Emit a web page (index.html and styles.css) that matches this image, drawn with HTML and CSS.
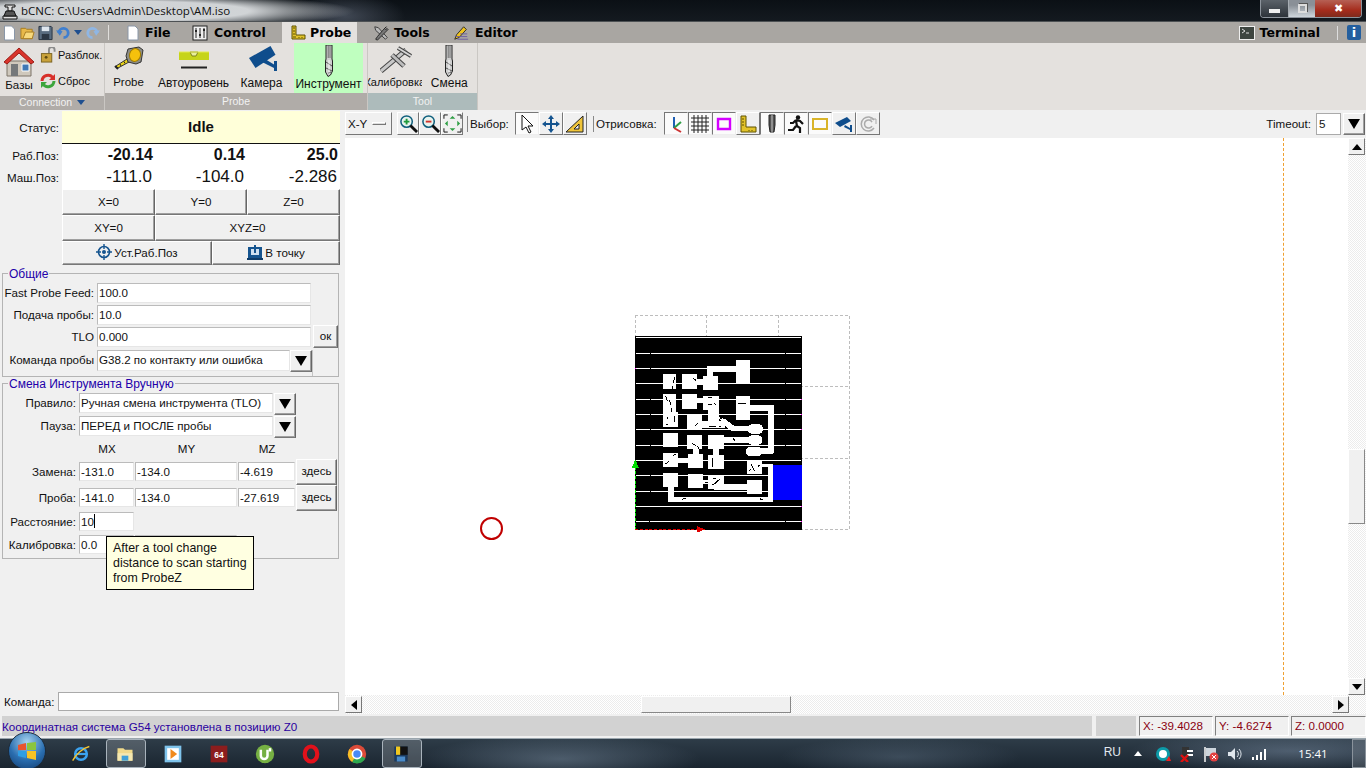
FILE: index.html
```html
<!DOCTYPE html>
<html lang="ru">
<head>
<meta charset="utf-8">
<title>bCNC</title>
<link rel="stylesheet" href="styles.css">
</head>
<body>
<svg class="defs" aria-hidden="true">
  <symbol id="mill" viewBox="0 0 8 32">
    <path d="M1 0V14L.5 16V27L3 31.500 5.500 30 7.500 26V16L7 14V0z" fill="#cfcfcf" stroke="#222" stroke-width="1"/>
    <path d="M3.200 0V13M5 0V13" stroke="#555" fill="none" stroke-width=".8"/>
    <path d="M1 17l6 4M1 23l6 3M3 28l3-1" stroke="#444" fill="none" stroke-width=".9"/>
    <path d="M4 15v13" stroke="#fff" fill="none" stroke-width=".8"/>
  </symbol>
  <symbol id="tri" viewBox="0 0 12 10"><path d="M0 0h12L6 10z" fill="#000"/></symbol>
  <symbol id="up" viewBox="0 0 10 6"><path d="M0 6h10L5 0z" fill="#000"/></symbol>
</svg>

<header class="titlebar">
  <svg class="appicon" viewBox="0 0 18 18"><path d="M2 14h14v3H2zM4 3h10v2h-3v4H7V5H4z" fill="#ddd" stroke="#111"/><path d="M5 9h8l2 5H3z" fill="#555" stroke="#111"/></svg>
  <span class="title">bCNC: C:\Users\Admin\Desktop\AM.iso</span>
  <div class="winbtns">
    <span class="wb wb-min"><i></i></span>
    <span class="wb wb-max"><i></i></span>
    <span class="wb wb-close">✖</span>
  </div>
</header>

<nav class="tabs">
  <div class="quick">
    <svg class="q" viewBox="0 0 14 16"><path d="M2 1h7l3 3v11H2z" fill="#fff" stroke="#8a97a8"/></svg>
    <svg class="q" viewBox="0 0 16 16"><path d="M1 3h5l1 1h6v10H1z" fill="#e8b94a" stroke="#a57b20"/><path d="M3 14l3-7h9l-2 7z" fill="#f7d97c" stroke="#a57b20"/></svg>
    <svg class="q" viewBox="0 0 16 16"><path d="M1 1h13l1 1v13H1z" fill="#5a6c80" stroke="#26313f"/><path d="M4 1h8v5H4z" fill="#dfe6ee"/><path d="M4 9h8v6H4z" fill="#2c3644"/></svg>
    <svg class="q" viewBox="0 0 16 16"><path d="M3 8a5 5 0 1 1 5 5" fill="none" stroke="#3f7fd0" stroke-width="3"/><path d="M0 5l4 6 3-5z" fill="#3f7fd0"/></svg>
    <svg class="q qs" viewBox="0 0 8 5"><path d="M0 0h8L4 5z" fill="#1f4f8f"/></svg>
    <svg class="q" viewBox="0 0 16 16"><path d="M13 8a5 5 0 1 0-5 5" fill="none" stroke="#8fb6e4" stroke-width="3"/><path d="M16 5l-4 6-3-5z" fill="#8fb6e4"/></svg>
    <span class="qsep"></span>
  </div>
  <a class="tab t-file"><svg class="ti" viewBox="0 0 14 16"><path d="M2 1h7l3 3v11H2z" fill="#fff" stroke="#8a97a8"/></svg>File</a>
  <a class="tab t-control"><svg class="ti" viewBox="0 0 16 16"><rect x="1" y="1" width="14" height="14" fill="#eee" stroke="#222"/><path d="M4 3v10M8 3v10M12 3v10" stroke="#222"/><path d="M3 5h2v2H3zM7 9h2v2H7zM11 4h2v2h-2z" fill="#222"/></svg>Control</a>
  <a class="tab t-probe"><svg class="ti" viewBox="0 0 16 16"><path d="M2 1h4v9h9v4H2z" fill="#e2c32a" stroke="#5e5200"/><path d="M3 12h3M3 9h2M3 6h2M3 3h2M9 12v1M12 12v1" stroke="#5e5200"/></svg>Probe</a>
  <a class="tab t-tools"><svg class="ti ti-l" viewBox="0 0 18 18"><path d="M2 2l4 1 10 11-2 2L3 6z" fill="#b9b9b9" stroke="#333"/><path d="M15 2l-4 4-6 7-2 3 2 1 3-3 6-6 3-3-1-1-2 1-1-1z" fill="#777" stroke="#222"/></svg>Tools</a>
  <a class="tab t-editor"><svg class="ti" viewBox="0 0 18 18"><path d="M2 16l2-5 8-9 3 3-8 9z" fill="#f0c31c" stroke="#222"/><path d="M3 13h13M5 16h12M8 10h8" stroke="#6a5aa0"/></svg>Editor</a>
  <a class="tab t-term"><svg class="ti ti-term" viewBox="0 0 16 14"><rect x=".5" y=".5" width="15" height="13" fill="#3d4540" stroke="#eee"/><path d="M3 3l3 2-3 2M7 7h3" stroke="#ddd" fill="none"/></svg>Terminal</a>
  <span class="tsep"></span>
  <span class="info">i</span>
</nav>

<section class="ribbon">
  <div class="group g-conn">
    <div class="g-body conn">
      <div class="rbtn home">
        <svg class="home-ic" viewBox="0 0 32 30"><path d="M4 14h24v15H4z" fill="#cfc8bc" stroke="#7d7568"/><path d="M1 15L16 1l15 14-3 2L16 6 4 17z" fill="#d9342b" stroke="#9c1d17"/><path d="M8 17h7v12H8z" fill="#75787a"/><path d="M19 17h7v7h-7z" fill="#3f78b5" stroke="#fff"/></svg>
        <span>Базы</span>
      </div>
      <div class="conn-side">
        <div class="sbtn"><svg class="s-ic" viewBox="0 0 16 17"><path d="M9 7V3a3 3 0 0 1 6 0v2" fill="none" stroke="#8a8a8a" stroke-width="2"/><rect x="1" y="7" width="11" height="9" fill="#c9a23a" stroke="#7a6320"/><circle cx="6" cy="11" r="1.500" fill="#5c4810"/></svg><span>Разблок.</span></div>
        <div class="sbtn"><svg class="s-ic" viewBox="0 0 16 16"><path d="M2 8a6 6 0 0 1 11-3" fill="none" stroke="#d7302a" stroke-width="3"/><path d="M15 1v6H9z" fill="#d7302a"/><path d="M14 8a6 6 0 0 1-11 3" fill="none" stroke="#3ba53b" stroke-width="3"/><path d="M1 15V9h6z" fill="#3ba53b"/></svg><span>Сброс</span></div>
      </div>
    </div>
    <div class="g-foot f-conn">Connection <svg class="f-tri" viewBox="0 0 8 5"><path d="M0 0h8L4 5z" fill="#1f4f8f"/></svg></div>
  </div>
  <div class="group g-probe">
    <div class="g-body">
      <div class="rb rb-probe">
        <svg class="rb-ic" viewBox="0 0 30 26"><path d="M2 20l11-7 2 3-11 6z" fill="#e8d21a" stroke="#333"/><path d="M1 20l3 3" stroke="#222" stroke-width="2"/><path d="M6 18l1 2M10 15.500l1 2" stroke="#222"/><path d="M14 3L25 1l4 3-2 12-5 2-8-2-2-6z" fill="#8d8d86" stroke="#333"/><ellipse cx="21" cy="9" rx="5.500" ry="6.500" fill="#f5c10c" stroke="#a17d00" transform="rotate(15 21 9)"/></svg>
        <span>Probe</span>
      </div>
      <div class="rb rb-auto">
        <svg class="rb-ic" viewBox="0 0 30 26"><path d="M0 6h30v8H0z" fill="#c6d41a"/><path d="M11 6l2 4h4l2-4z" fill="#e9ee9a" stroke="#6b6f10" stroke-width=".8"/><path d="M0 6h30" stroke="#e4ea50"/><path d="M2 21.500h26" stroke="#222" stroke-width="2"/></svg>
        <span>Автоуровень</span>
      </div>
      <div class="rb rb-cam">
        <svg class="rb-ic" viewBox="0 0 30 26"><path d="M2 12L23.500 0 28.500 8.700 8.500 22z" fill="#0f4d8c"/><path d="M15 16l12 6v3h3V15h-3v3.500L18 13z" fill="#0f4d8c"/></svg>
        <span>Камера</span>
      </div>
      <div class="rb rb-tool on">
        <svg class="rb-mill"><use href="#mill"/></svg>
        <span>Инструмент</span>
      </div>
    </div>
    <div class="g-foot">Probe</div>
  </div>
  <div class="group g-tool">
    <div class="g-body">
      <div class="rb rb-cal">
        <svg class="rb-ic" viewBox="0 0 32 28"><path d="M1 25L26 4" stroke="#444" stroke-width="5"/><path d="M1 25L26 4" stroke="#c8c8c8" stroke-width="3"/><path d="M12 9l12 11" stroke="#444" stroke-width="5"/><path d="M12 9l12 11" stroke="#bdbdbd" stroke-width="3"/><path d="M18 2l13 8" stroke="#444" stroke-width="4"/><path d="M18 2l13 8" stroke="#d5d5d5" stroke-width="2"/></svg>
        <span>Калибровка</span>
      </div>
      <div class="rb rb-chg">
        <svg class="rb-mill"><use href="#mill"/></svg>
        <span>Смена</span>
      </div>
    </div>
    <div class="g-foot f-tool">Tool</div>
  </div>
</section>

<main class="main">
  <aside class="left">
    <div class="state">
      <div class="lbl st-l">Статус:</div>
      <div class="idle">Idle</div>
      <div class="lbl pos-l">Раб.Поз:</div>
      <div class="posv b">-20.14</div><div class="posv b">0.14</div><div class="posv b">25.0</div>
      <div class="lbl pos-l">Маш.Поз:</div>
      <div class="posv">-111.0</div><div class="posv">-104.0</div><div class="posv">-2.286</div>
    </div>
    <div class="btnrow r3"><button class="btn">X=0</button><button class="btn">Y=0</button><button class="btn">Z=0</button></div>
    <div class="btnrow r2a"><button class="btn">XY=0</button><button class="btn">XYZ=0</button></div>
    <div class="btnrow r2b">
      <button class="btn"><svg class="bi" viewBox="0 0 16 16"><circle cx="8" cy="8" r="5.500" fill="none" stroke="#15548f" stroke-width="1.600"/><circle cx="8" cy="8" r="2" fill="#15548f"/><path d="M8 0v5M8 11v5M0 8h5M11 8h5" stroke="#15548f" stroke-width="1.400"/></svg>Уст.Раб.Поз</button>
      <button class="btn"><svg class="bi" viewBox="0 0 16 16"><path d="M1 3h14v11H1z" fill="#15548f"/><path d="M4 5h8v6H4z" fill="#cfe0f0"/><path d="M7 1h2v8H7z" fill="#15548f"/><path d="M0 14h16v2H0z" fill="#0d3b68"/></svg>В точку</button>
    </div>

    <fieldset class="fs fs-common">
      <legend>Общие</legend>
      <div class="frow"><label class="fl w95">Fast Probe Feed:</label><span class="ent e-wide">100.0</span></div>
      <div class="frow"><label class="fl w95">Подача пробы:</label><span class="ent e-wide">10.0</span></div>
      <div class="frow"><label class="fl w95">TLO</label><span class="ent e-wide">0.000</span><button class="btn okb">ок</button></div>
      <div class="frow frow-cmb"><label class="fl w95">Команда пробы</label><span class="ent e-cmb">G38.2 по контакту или ошибка</span><button class="btn arr"><svg class="tri"><use href="#tri"/></svg></button><span class="cmb-end"></span></div>
    </fieldset>

    <fieldset class="fs fs-tool">
      <legend>Смена Инструмента Вручную</legend>
      <div class="trow t-a"><label class="fl w77">Правило:</label><span class="ent e-rule">Ручная смена инструмента (TLO)</span><button class="btn arr"><svg class="tri"><use href="#tri"/></svg></button></div>
      <div class="trow t-a"><label class="fl w77">Пауза:</label><span class="ent e-rule">ПЕРЕД и ПОСЛЕ пробы</span><button class="btn arr"><svg class="tri"><use href="#tri"/></svg></button></div>
      <div class="mhead"><span class="mh1">MX</span><span class="mh2">MY</span><span class="mh3">MZ</span></div>
      <div class="trow t-b"><label class="fl w77">Замена:</label><span class="ent e-x">-131.0</span><span class="ent e-y">-134.0</span><span class="ent e-z">-4.619</span><button class="btn here">здесь</button></div>
      <div class="trow t-b"><label class="fl w77">Проба:</label><span class="ent e-x">-141.0</span><span class="ent e-y">-134.0</span><span class="ent e-z">-27.619</span><button class="btn here">здесь</button></div>
      <div class="trow t-c"><label class="fl w77">Расстояние:</label><span class="ent e-x">10<i class="caret"></i></span></div>
      <div class="trow t-c"><label class="fl w77">Калибровка:</label><span class="ent e-x">0.0</span><span class="ent e-y"></span></div>
      <div class="tooltip">After a tool change<br>distance to scan starting<br>from ProbeZ</div>
    </fieldset>

    <div class="cmdrow"><label class="cmdl">Команда:</label><span class="ent e-cmd"></span></div>
  </aside>

  <div class="right">
    <div class="toolbar">
      <button class="tb xy">X-Y<i class="ind"></i></button>
      <button class="tb ic tz"><svg viewBox="0 0 20 20"><circle cx="8" cy="8" r="6" fill="#e8f3ee" stroke="#0f5f7d" stroke-width="1.600"/><path d="M5 8h6M8 5v6" stroke="#1f9a3c" stroke-width="2"/><path d="M12 12l7 7" stroke="#111" stroke-width="3"/></svg></button>
      <button class="tb ic tz"><svg viewBox="0 0 20 20"><circle cx="8" cy="8" r="6" fill="#e8f3ee" stroke="#0f5f7d" stroke-width="1.600"/><path d="M5 8h6" stroke="#d0342c" stroke-width="2"/><path d="M12 12l7 7" stroke="#111" stroke-width="3"/></svg></button>
      <button class="tb ic tz"><svg viewBox="0 0 20 20"><path d="M1 5V1h4M15 1h4v4M19 15v4h-4M5 19H1v-4" fill="none" stroke="#111"/><path d="M7 5l3-3 3 3zM7 15l3 3 3-3zM5 7l-3 3 3 3zM15 7l3 3-3 3z" fill="#2f9e44"/></svg></button>
      <span class="vsep s1"></span>
      <span class="tl tl1">Выбор:</span>
      <button class="tb ic sel"><svg viewBox="0 0 20 20"><path d="M5 1v15l4-3 3 6 2-1-3-6h5z" fill="#fff" stroke="#111"/></svg></button>
      <button class="tb ic"><svg viewBox="0 0 20 20"><path d="M10 1l3 4h-2v4h4V7l4 3-4 3v-2h-4v4h2l-3 4-3-4h2v-4H5v2l-4-3 4-3v2h4V5H7z" fill="#15548f"/></svg></button>
      <button class="tb ic"><svg viewBox="0 0 20 20"><path d="M1 18L18 2v16z" fill="#f0c53a" stroke="#222"/><path d="M9 15l5-5v5z" fill="#f0f0f0" stroke="#222"/></svg></button>
      <span class="vsep s2"></span>
      <span class="tl tl2">Отрисовка:</span>
      <button class="tb ic sel"><svg viewBox="0 0 20 20"><path d="M8 3v11" stroke="#1e5fb4" stroke-width="2"/><path d="M8 14l7-6" stroke="#2e9e44" stroke-width="2"/><path d="M8 14l7 4" stroke="#c33" stroke-width="2"/></svg></button>
      <button class="tb ic sel"><svg viewBox="0 0 20 20"><path d="M1 4h18M1 8h18M1 12h18M1 16h18M4 1v18M8 1v18M12 1v18M16 1v18" stroke="#222" fill="none"/></svg></button>
      <button class="tb ic sel"><svg viewBox="0 0 20 20"><path d="M4 5h12v10H4z" fill="none" stroke="#d400ff" stroke-width="2.400"/></svg></button>
      <button class="tb ic"><svg viewBox="0 0 20 20"><path d="M3 2h5v11h10v5H3z" fill="#e2c32a" stroke="#5e5200"/><path d="M4 5h2M4 8h2M4 11h2M11 16v1M14 16v1" stroke="#5e5200"/></svg></button>
      <button class="tb ic sel"><svg viewBox="0 0 20 20"><path d="M7 1h6v10l-1 7H8l-1-7z" fill="#555" stroke="#222"/><path d="M10 1v17" stroke="#ccc"/></svg></button>
      <button class="tb ic sel"><svg viewBox="0 0 20 20"><circle cx="12" cy="3.500" r="2.200" fill="#111"/><path d="M10 6l4 1 3 3M10 6l-3 3-3 0M10 7l1 5 3 2 0 5M10 12l-3 4-5 0" stroke="#111" stroke-width="2.200" fill="none"/></svg></button>
      <button class="tb ic sel"><svg viewBox="0 0 20 20"><path d="M3 5h14v10H3z" fill="none" stroke="#d9b429" stroke-width="2"/></svg></button>
      <button class="tb ic"><svg viewBox="0 0 20 20"><path d="M1 9l12-6 4 4-11 6z" fill="#0f4d8c"/><path d="M11 11l5 3v-3h2v7h-2v-2l-6-3z" fill="#0f4d8c"/></svg></button>
      <button class="tb ic"><svg viewBox="0 0 20 20"><path d="M16 14a7 7 0 1 1 0-8M14 12a4 4 0 1 1 0-4" fill="none" stroke="#aaa" stroke-width="1.500"/><path d="M12 5h6v5" fill="none" stroke="#aaa"/></svg></button>
      <span class="tspacer"></span>
      <span class="tl tl3">Timeout:</span>
      <span class="ent e-to">5</span>
      <button class="btn arr arr-to"><svg class="tri"><use href="#tri"/></svg></button>
    </div>

    <div class="viewrow">
      <div class="canvas">
        <i class="margin m1"></i>
        <svg class="pcb" viewBox="0 0 705 690" shape-rendering="crispEdges">
          <path d="M31 16H673V658M31 16V658M245 16V658M460 16V658M31 230H673M31 445H673M31 658H673" fill="none" stroke="#bdbdbd" stroke-width="3" stroke-dasharray="9 6"/>
          <rect x="30" y="78" width="501" height="581" fill="#000"/>
          <path d="M32 81H528M32 130H528M32 175H528M32 220H528M32 268H528M32 313H528M32 358H528M32 406H528M32 450H528M32 495H528M32 545H528M32 590H528M32 634H528" stroke="#fff" stroke-width="3"/>
          <path d="M75 128v5M75 173v5M75 266v5M75 311v5M75 356v5M75 404v5M75 493v5M75 543v5M72 632v5M480 128v5M480 173v5M480 218v5M480 266v5M480 311v5M480 356v5M480 404v5M480 493v5M480 632v5" stroke="#000" stroke-width="3"/>
          <g fill="#fff">
            <rect x="114" y="192" width="40" height="45"/><rect x="170" y="192" width="45" height="45"/><rect x="212" y="208" width="26" height="18"/>
            <rect x="234" y="198" width="45" height="42"/><rect x="247" y="168" width="85" height="18"/><rect x="247" y="168" width="18" height="35"/><rect x="332" y="150" width="43" height="72"/>
            <rect x="114" y="252" width="40" height="55"/><rect x="124" y="300" width="22" height="12"/><rect x="114" y="307" width="45" height="45"/>
            <rect x="170" y="252" width="45" height="45"/><rect x="215" y="265" width="25" height="15"/><rect x="234" y="258" width="48" height="42"/><rect x="248" y="300" width="35" height="50"/>
            <rect x="332" y="258" width="43" height="72"/><rect x="375" y="285" width="70" height="18"/><rect x="428" y="285" width="18" height="145"/>
            <rect x="186" y="315" width="45" height="42"/><rect x="225" y="332" width="75" height="22"/>
            <path d="M280 320l22 8 26 20h45v16h-52l-28-22z"/>
            <rect x="368" y="342" width="46" height="30" rx="15"/>
            <rect x="114" y="369" width="45" height="42"/><rect x="186" y="375" width="45" height="42"/><rect x="203" y="417" width="18" height="20"/><rect x="189" y="432" width="45" height="42"/>
            <rect x="248" y="375" width="50" height="42"/><rect x="263" y="417" width="18" height="20"/><rect x="248" y="435" width="50" height="42"/>
            <rect x="298" y="382" width="70" height="18"/><rect x="368" y="375" width="44" height="30" rx="15"/>
            <rect x="362" y="410" width="50" height="28" rx="14"/><rect x="405" y="415" width="40" height="18"/>
            <rect x="114" y="430" width="45" height="40"/><rect x="159" y="445" width="30" height="14"/>
            <rect x="366" y="450" width="46" height="42"/><rect x="412" y="462" width="30" height="10"/>
            <rect x="114" y="489" width="45" height="42"/><rect x="128" y="531" width="18" height="45"/><rect x="128" y="560" width="315" height="16"/>
            <rect x="189" y="492" width="45" height="42"/><rect x="234" y="510" width="15" height="12"/><rect x="249" y="497" width="48" height="40"/><rect x="268" y="522" width="100" height="18"/><rect x="366" y="510" width="46" height="42"/>
            <rect x="428" y="462" width="16" height="112"/>
          </g>
          <rect x="444" y="465" width="86" height="105" fill="#0000ff"/>
          <path d="M150 200l-6 20M142 228v8M205 205l8 6M122 258l6 16M132 270l6 14M138 295v10M128 320l-2 6M150 318l-2 18M124 344h6M218 340l-8 8M248 262h14M250 284h10M268 280l6 6M252 350h22M282 350h6M284 322l8 6M200 400l12 6M218 408l4 8M262 445v26M122 462l10-8M144 436l8-2M325 386l6 6M340 280h24M378 462l10 20M398 470l8-6M372 482l6-4M264 506h10M270 520l16-14M240 516h8M172 568l12-4M404 566l10 4M262 525l10-6" stroke="#000" stroke-width="3" fill="none"/>
          <path d="M31 175h2M528 268h3M528 313h3M528 358h3M528 590h3M528 634h3" stroke="#f0f" stroke-width="3"/>
          <path d="M31 470V656" stroke="#00e000" stroke-width="3" stroke-dasharray="9 5"/>
          <path d="M31 448l-10 25h20z" fill="#00e000"/>
          <path d="M31 658H218" stroke="#e00000" stroke-width="3" stroke-dasharray="9 5"/>
          <path d="M240 658l-25 -10v20z" fill="#e00000"/>
        </svg>
        <i class="gantry"></i>
      </div>
      <div class="vscroll">
        <span class="sb sb-t"><svg class="sa"><use href="#up"/></svg></span>
        <span class="sv-thumb"></span>
        <span class="sb sb-b"><svg class="sa sa-d"><use href="#up"/></svg></span>
      </div>
    </div>
    <div class="hscroll">
      <span class="sb"><svg class="sh sh-l" viewBox="0 0 6 10"><path d="M6 0v10L0 5z"/></svg></span>
      <span class="sh-thumb"></span>
      <span class="sb sb-r"><svg class="sh" viewBox="0 0 6 10"><path d="M0 0v10l6-5z"/></svg></span>
    </div>
  </div>
</main>

<footer class="statusbar">
  <div class="st-msg">Координатная система G54 установлена в позицию Z0</div>
  <div class="st-gap"></div>
  <div class="coord">X: -39.4028</div>
  <div class="coord">Y: -4.6274</div>
  <div class="coord cz">Z: 0.0000</div>
</footer>

<div class="taskbar">
  <div class="orb"><svg viewBox="0 0 24 24"><path d="M3 6l8-2v7H3z" fill="#e8542f"/><path d="M12 4l9-1v8h-9z" fill="#8bc53f"/><path d="M3 12h8v7l-8-2z" fill="#2f9ee5"/><path d="M12 12h9v9l-9-2z" fill="#f7c325"/></svg></div>
  <span class="tk"><svg viewBox="0 0 24 24"><circle cx="12" cy="12" r="7" fill="none" stroke="#3ba3f0" stroke-width="3"/><path d="M6 12h13" stroke="#3ba3f0" stroke-width="2.600"/><path d="M2 20C6 12 14 5 22 3" fill="none" stroke="#f4c430" stroke-width="1.600"/></svg></span>
  <span class="tk act a1"><svg viewBox="0 0 24 24"><path d="M3 5h7l2 2h9v13H3z" fill="#f0d98a"/><path d="M3 11h18v9H3z" fill="#f5e7b0"/><path d="M8 14h8v6H8z" fill="#3fa0d8"/></svg></span>
  <span class="tk"><svg viewBox="0 0 24 24"><rect x="2" y="2" width="20" height="20" fill="#7fc4ec"/><rect x="5" y="5" width="14" height="14" fill="#fff"/><path d="M9 6l8 6-8 6z" fill="#f08a1c"/></svg></span>
  <span class="tk"><svg viewBox="0 0 24 24"><rect x="2" y="2" width="20" height="20" fill="#8c1d1d"/><text x="12" y="17" class="tk64">64</text></svg></span>
  <span class="tk"><svg viewBox="0 0 24 24"><circle cx="12" cy="12" r="11" fill="#76b043"/><path d="M7 7v7a4 4 0 0 0 8 0V7" fill="none" stroke="#fff" stroke-width="3"/><path d="M18 5v4" stroke="#fff" stroke-width="3"/></svg></span>
  <span class="tk"><svg viewBox="0 0 24 24"><ellipse cx="12" cy="12" rx="7.500" ry="9" fill="none" stroke="#e2111b" stroke-width="5"/></svg></span>
  <span class="tk"><svg viewBox="0 0 24 24"><circle cx="12" cy="12" r="11" fill="#dd4b39"/><path d="M12 12L22 17A11 11 0 0 1 6 21.500z" fill="#2da94f"/><path d="M12 12L6 21.500A11 11 0 0 1 3 6z" fill="#f6c026"/><circle cx="12" cy="12" r="5.500" fill="#4a8bf5" stroke="#fff" stroke-width="2"/></svg></span>
  <span class="tk act a2"><svg viewBox="0 0 24 24"><path d="M4 3h16v18H4z" fill="#1b3a5e"/><path d="M10 3h10v10H10z" fill="#111"/><path d="M6 3h5v10H6z" fill="#f2c81f"/><path d="M7 15h10v6H7z" fill="#4a8bc9"/></svg></span>
  <div class="tray">
    <span class="ru">RU</span>
    <svg class="tr-ar" viewBox="0 0 8 5"><path d="M0 5h8L4 0z" fill="#fff"/></svg>
    <svg class="ti16" viewBox="0 0 16 16"><circle cx="8" cy="8" r="7" fill="#0d9aa8"/><circle cx="8" cy="8" r="4" fill="#fff"/><path d="M11 15l3-5 2 5z" fill="#e22"/></svg>
    <svg class="ti16" viewBox="0 0 16 16"><path d="M3 1h7v14H3z" fill="#333"/><path d="M8 5h6M8 9h6" stroke="#fff" stroke-width="2"/><path d="M2 9l7 7M9 9l-7 7" stroke="#d11" stroke-width="2.400"/></svg>
    <svg class="ti16" viewBox="0 0 16 16"><path d="M2 1v15" stroke="#eee" stroke-width="1.600"/><path d="M3 2h10v8H3z" fill="#cdd5dc"/><circle cx="11" cy="11" r="4.500" fill="#e34141"/><path d="M9 9l4 4M13 9l-4 4" stroke="#fff"/></svg>
    <svg class="ti16" viewBox="0 0 16 16"><path d="M1 6h3l4-4v12l-4-4H1z" fill="#dfe6ec"/><path d="M10 5a4 4 0 0 1 0 6M12 3a7 7 0 0 1 0 10" stroke="#dfe6ec" fill="none"/></svg>
    <svg class="ti16" viewBox="0 0 16 16"><path d="M1 11h2v3H1zM5 9h2v5H5zM9 6h2v8H9zM13 3h2v11h-2z" fill="#fff"/></svg>
    <span class="clock">15:41</span>
    <span class="showdesk"></span>
  </div>
</div>
</body>
</html>
```
FILE: styles.css
```css
* { box-sizing: border-box; }
html, body { margin: 0; padding: 0; }
body {
  width: 1366px; height: 768px; overflow: hidden;
  display: flex; flex-direction: column;
  font: 11.6px "Liberation Sans", Arial, sans-serif;
  color: #111; background: #f0f0f0;
}
.defs { position: absolute; width: 0; height: 0; }
button { font: inherit; color: inherit; padding: 0; }

/* title bar */
.titlebar {
  height: 21px; flex: none; display: flex; align-items: center; position: relative;
  background:
    radial-gradient(ellipse 235px 18px at 120px 11px, rgba(225,228,230,.92) 55%, rgba(200,205,210,0) 100%),
    radial-gradient(ellipse 60px 24px at 345px 16px, rgba(120,130,150,.45), transparent),
    linear-gradient(#0b1015, #141a20);
}
.appicon { width: 18px; height: 18px; margin-left: 1px; }
.title { margin-left: 2px; font: 11.5px "Open Sans", sans-serif; color: #111; }
.winbtns { position: absolute; left: 1260px; top: 0; display: flex; height: 18px; border: 1px solid #8d949c; border-top: 0; border-radius: 0 0 4px 4px; overflow: hidden; }
.wb { display: flex; align-items: center; justify-content: center; height: 17px; }
.wb-min { width: 28px; background: linear-gradient(#5b6269, #2d333a); border-right: 1px solid #a7adb3; }
.wb-min i { width: 11px; height: 4px; background: #eee; margin-top: 4px; }
.wb-max { width: 26px; background: linear-gradient(#8a9097 30%, #cfd6dc); }
.wb-max i { width: 9px; height: 9px; border: 2px solid #ddd; box-shadow: 1px -1px 0 #555; }
.wb-close { width: 46px; background: linear-gradient(#b66054, #a52c1c 60%, #7f2a1c); color: #fff; font-size: 11px; }

/* tabs */
.tabs {
  height: 22px; flex: none; display: flex; align-items: center; position: relative;
  background: #a9a6a2; border-top: 1px solid #4d5154;
  font: bold 12.5px "DejaVu Sans", sans-serif; color: #000;
}
.quick { display: flex; align-items: center; width: 118px; padding-left: 2px; height: 100%; gap: 3px; }
.q { width: 15px; height: 16px; }
.qs { width: 8px; height: 5px; }
.qsep { width: 1px; height: 15px; background: #e0dedb; margin-left: 5px; }
.tab { display: flex; align-items: center; height: 100%; white-space: nowrap; }
.ti { width: 16px; height: 16px; margin-right: 6px; flex: none; }
.t-file { margin-left: 7px; width: 67px; }
.t-file .ti { margin-right: 4px; }
.t-control { width: 90px; }
.t-probe { background: #e4e1de; width: 75px; padding-left: 8px; }
.t-probe .ti { margin-right: 4px; }
.t-tools { margin-left: 15px; width: 81px; }
.t-tools .ti-l { width: 18px; margin-right: 4px; }
.t-editor { width: 80px; }
.t-term { margin-left: auto; }
.ti-term { margin-right: 5px; }
.tsep { width: 1px; height: 14px; background: #ddd; margin-left: 17px; }
.info { width: 14px; height: 15px; margin: 0 5px 0 9px; background: #245f9e; color: #fff; border-radius: 2px; text-align: center; font: bold 13px/15px "DejaVu Sans", sans-serif; }

/* ribbon */
.ribbon { height: 67px; flex: none; display: flex; background: #e4e1de; }
.group { display: flex; flex-direction: column; border-right: 1px solid #cac7c3; }
.g-conn { width: 105px; }
.g-probe { width: 263px; }
.g-tool { width: 110px; }
.g-body { flex: 1; display: flex; position: relative; min-height: 0; }
.g-foot { height: 17px; background: #b0aca8; color: #f2f2f2; text-align: center; line-height: 17px; font-size: 10.5px; }
.f-conn { height: 14px; line-height: 13px; }
.f-tool { background: #adbbbb; }
.f-tri { width: 8px; height: 5px; margin-left: 2px; vertical-align: 1px; }
.conn { padding-left: 3px; }
.home { width: 32px; display: flex; flex-direction: column; align-items: center; padding-top: 4px; }
.home-ic { width: 32px; height: 30px; }
.home span { margin-top: 2px; font-size: 11.5px; }
.conn-side { display: flex; flex-direction: column; padding: 4px 0 0 5px; gap: 10px; font-size: 11px; }
.sbtn { display: flex; align-items: center; gap: 2px; height: 16px; white-space: nowrap; }
.s-ic { width: 16px; height: 16px; flex: none; }
.rb { display: flex; flex-direction: column; align-items: center; height: 100%; font-size: 12px; white-space: nowrap; overflow: hidden; padding-top: 3px; }
.rb span { position: absolute; top: 33px; }
.rb-ic { width: 30px; height: 26px; flex: none; }
.rb-mill { width: 8px; height: 32px; margin-top: -1px; flex: none; }
.rb-probe { width: 49px; margin-left: -1px; }
.rb-probe span { font-size: 11.5px; }
.rb-auto { width: 81px; }
.rb-cam { width: 55px; }
.rb-tool { width: 69px; }
.rb-tool.on { background: #bfffbf; margin-left: 5px; }
.rb-tool span { top: 34px; }
.rb-cal { width: 54px; position: relative; }
.rb-cal .rb-ic { width: 32px; height: 28px; margin-left: 3px; }
.rb-cal span { left: 50%; transform: translateX(-50%); font-size: 11px; }
.rb-chg { width: 56px; }

/* main */
.main { height: 604px; flex: none; display: flex; }
.left { width: 345px; flex: none; position: relative; padding-top: 1px; background: #f0f0f0; display: flex; flex-direction: column; }
.state { display: grid; grid-template-columns: 62px 93px 92px 93px; grid-template-rows: 33px 22px 23px; }
.lbl { text-align: right; padding-right: 3px; align-self: center; }
.idle { grid-column: 2 / 5; background: #ffffd9; border-bottom: 1px solid #111; text-align: center; font: bold 15px/32px "Liberation Sans", sans-serif; }
.posv { background: #fff; text-align: right; padding-right: 3px; font-size: 17px; line-height: 22px; }
.posv.b { font-weight: bold; font-size: 16px; padding-right: 2px; }
.btnrow { display: grid; margin-left: 62px; width: 278px; height: 26px; }
.r3 { grid-template-columns: 93px 92px 93px; }
.r2a { grid-template-columns: 93px 185px; }
.r2b { grid-template-columns: 150px 128px; height: 24px; }
.btn {
  background: #f0f0f0; border: 1px solid; border-color: #fff #666 #777 #fff;
  box-shadow: inset -1px -1px 0 #a0a0a0;
  display: flex; align-items: center; justify-content: center;
  padding-bottom: 2px;
}
.bi { width: 16px; height: 16px; margin-right: 2px; }
.fs { position: relative; margin: 0 0 0 2px; padding: 0; width: 337px; border: 1px solid #b4b4b4; min-width: 0; }
.fs legend { position: absolute; top: -6px; left: 5px; padding: 0 1px; background: #f0f0f0; color: #2200aa; font-size: 12px; line-height: 12px; }
.fs-common { margin-top: 8px; height: 104px; padding-top: 9px; }
.fs-tool { margin-top: 6px; height: 176px; padding-top: 9px; }
.frow { display: flex; align-items: flex-start; height: 22px; line-height: 20px; }
.frow-cmb { height: 27px; margin-top: 1px; }
.fl { text-align: right; padding-right: 3px; white-space: nowrap; flex: none; }
.w95 { width: 94px; }
.w77 { width: 76px; }
.ent { display: block; background: #fff; border: 1px solid #e6e6e6; border-top-color: #bbb; border-left-color: #bbb; height: 20px; line-height: 18px; padding-left: 1px; white-space: nowrap; overflow: hidden; flex: none; }
.e-wide { width: 214px; }
.e-cmb { width: 193px; height: 21px; }
.okb { width: 25px; height: 23px; margin: -2px 0 0 2px; }
.arr { width: 22px; height: 22px; flex: none; padding: 0; }
.cmb-end { width: 1px; height: 26px; background: #c4c4c4; }
.tri { width: 12px; height: 10px; }
.trow { display: flex; align-items: flex-start; }
.t-a { height: 23px; line-height: 20px; }
.e-rule { width: 194px; }
.t-a .arr { margin-left: 1px; }
.mhead { height: 20px; margin-left: 76px; display: grid; grid-template-columns: 56px 103px 58px; text-align: center; line-height: 20px; }
.t-b { height: 26px; line-height: 26px; }
.t-b .ent { height: 19px; line-height: 17px; margin: 3px 1px 0 0; }
.e-x { width: 55px; }
.e-y { width: 102px; }
.e-z { width: 57px; }
.here { width: 41px; height: 26px; }
.t-c { height: 23px; line-height: 21px; }
.t-c .ent { height: 19px; line-height: 17px; margin: 1px 1px 0 0; }
.caret { display: inline-block; width: 1px; height: 14px; background: #000; vertical-align: -2px; }
.tooltip { position: absolute; left: 103px; top: 152px; width: 148px; height: 54px; padding: 4px 6px; background: #ffffe1; border: 1px solid #000; line-height: 15px; z-index: 3; font-size: 12.4px; }
.cmdrow { margin-top: auto; height: 19px; display: flex; align-items: center; padding-left: 4px; margin-bottom: 3px; }
.cmdl { width: 54px; flex: none; }
.e-cmd { width: 281px; height: 19px; border: 1px solid #aaa; }

/* right */
.right { width: 1021px; flex: none; display: flex; flex-direction: column; }
.toolbar { height: 28px; flex: none; display: flex; align-items: center; padding: 0 1px 1px 0; }
.tb { width: 24px; height: 23px; background: #f0f0f0; border: 1px solid; border-color: #fff #777 #777 #fff; display: flex; align-items: center; justify-content: center; flex: none; }
.tb svg { width: 20px; height: 20px; }
.tb.tz { width: 22px; }
.tb.tz svg { width: 19px; height: 19px; }
.tb.sel { background: #fbfbfb; border-color: #777 #eee #eee #777; }
.xy { width: 47px; margin-right: 5px; justify-content: flex-start; padding-left: 2px; color: #111; }
.ind { width: 14px; height: 3px; margin-left: 5px; background: #ddd; border: 1px solid #777; border-color: #fff #777 #777 #fff; }
.vsep { width: 1px; height: 16px; background: #888; }
.s1 { margin: 0 2px 0 4px; }
.s2 { margin: 0 2px 0 6px; }
.tl { white-space: nowrap; }
.tl1 { margin-right: 5px; width: 40px; }
.tl2 { margin-right: 5px; width: 63px; }
.tspacer { flex: 1; }
.tl3 { margin-right: 5px; }
.e-to { width: 25px; height: 22px; line-height: 20px; border: 1px solid #aaa; margin-right: 2px; padding-left: 2px; }
.arr-to { width: 22px; height: 22px; }
.viewrow { flex: 1; display: flex; min-height: 0; }
.canvas { flex: 1; position: relative; background: #fff; overflow: hidden; }
.margin { position: absolute; width: 0; border-left: 1px dashed #f0a030; top: 0; bottom: 0; left: 938px; }
.pcb { position: absolute; left: 280px; top: 172px; width: 235px; height: 230px; }
.gantry { position: absolute; left: 135px; top: 379px; width: 23px; height: 23px; border: 2px solid #c00000; border-radius: 50%; }
.vscroll { width: 18px; flex: none; display: flex; flex-direction: column; position: relative; background: repeating-conic-gradient(#fff 0 25%, #ececec 0 50%) 0 0 / 2px 2px; }
.sb { width: 17px; height: 17px; background: #f0f0f0; border: 1px solid; border-color: #fff #777 #777 #fff; display: flex; align-items: center; justify-content: center; flex: none; }
.sa { width: 10px; height: 6px; }
.sa-d { transform: scaleY(-1); }
.sv-thumb { position: absolute; left: 0; top: 311px; width: 17px; height: 75px; background: #f0f0f0; border: 1px solid; border-color: #fff #888 #888 #fff; }
.sb-b { margin-top: auto; }
.hscroll { height: 19px; flex: none; display: flex; align-items: center; position: relative; background: repeating-conic-gradient(#fff 0 25%, #ececec 0 50%) 0 0 / 2px 2px; }
.sh { width: 6px; height: 10px; }
.sh-thumb { position: absolute; left: 296px; top: 1px; width: 150px; height: 17px; background: #f0f0f0; border: 1px solid; border-color: #fff #888 #888 #fff; }
.sb-r { margin-left: auto; margin-right: 17px; }

/* status */
.statusbar { height: 24px; flex: none; display: flex; padding: 2px 0 2px 2px; }
.st-msg { width: 1090px; background: #d2d2d2; color: #2a00a0; line-height: 21px; white-space: nowrap; }
.st-gap { width: 40px; margin-left: 4px; margin-right: 1px; background: #d2d2d2; }
.coord { width: 74px; margin-left: 2px; border: 1px solid; border-color: #808080 #fff #fff #808080; color: #8a0010; line-height: 18px; padding-left: 3px; white-space: nowrap; }
.coord.cz { width: 75px; }

/* taskbar */
.taskbar {
  height: 30px; flex: none; display: flex; align-items: center; position: relative;
  border-top: 1px solid #9aa5ad;
  background:
    radial-gradient(ellipse 140px 24px at 560px 20px, rgba(130,150,170,.45), transparent),
    radial-gradient(ellipse 160px 22px at 1290px 12px, rgba(140,160,185,.4), transparent),
    radial-gradient(ellipse 120px 20px at 900px 18px, rgba(110,130,150,.35), transparent),
    linear-gradient(#2e3c48, #1a2530);
}
.orb { width: 38px; height: 38px; margin: -6px 12px 0 8px; border-radius: 50%; flex: none; display: flex; align-items: center; justify-content: center; background: radial-gradient(circle at 50% 25%, #a5d2ef, #2a6eb0 55%, #123a6c); border: 1px solid #1b2b3c; z-index: 2; }
.orb svg { width: 24px; height: 24px; }
.tk { width: 46px; height: 29px; flex: none; display: flex; align-items: center; justify-content: center; }
.tk svg { width: 20px; height: 20px; }
.tk64 { font: bold 10px "Liberation Sans", sans-serif; fill: #fff; text-anchor: middle; }
.act { position: relative; }
.act::before { content: ""; position: absolute; left: 2px; width: 38px; top: 0; bottom: 0; border: 1px solid #a9b3bc; border-radius: 3px; background: rgba(255,255,255,.18); }
.act svg { position: relative; margin-left: -4px; }
.tray { margin-left: auto; display: flex; align-items: center; height: 100%; color: #fff; position: relative; }
.ru { position: absolute; right: 245px; top: 6px; font-size: 12px; color: #e2e8ee; }
.tr-ar { width: 8px; height: 5px; margin-right: 13px; }
.ti16 { width: 16px; height: 16px; margin-right: 8px; }
.clock { width: 70px; margin-left: 7px; padding-right: 8px; text-align: center; font: 11.5px "Open Sans", sans-serif; }
.showdesk { width: 14px; height: 29px; border: 1px solid #8a939c; background: rgba(255,255,255,.12); }
```
